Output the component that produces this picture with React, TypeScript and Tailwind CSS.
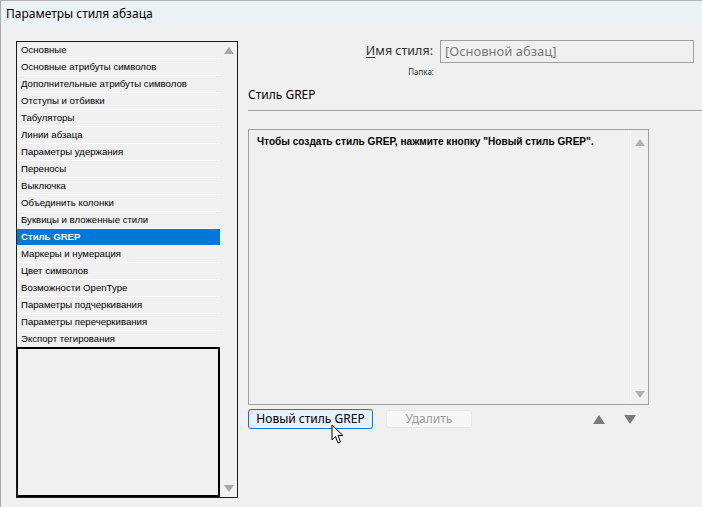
import React from "react";

const items = [
  "Основные",
  "Основные атрибуты символов",
  "Дополнительные атрибуты символов",
  "Отступы и отбивки",
  "Табуляторы",
  "Линии абзаца",
  "Параметры удержания",
  "Переносы",
  "Выключка",
  "Объединить колонки",
  "Буквицы и вложенные стили",
  "Стиль GREP",
  "Маркеры и нумерация",
  "Цвет символов",
  "Возможности OpenType",
  "Параметры подчеркивания",
  "Параметры перечеркивания",
  "Экспорт тегирования",
];

function Tri({ down, color = "#a6a6a6" }: { down?: boolean; color?: string }) {
  return (
    <svg width="10" height="7" viewBox="0 0 10 7">
      <polygon points={down ? "0,0 10,0 5,7" : "5,0 10,7 0,7"} fill={color} />
    </svg>
  );
}

function Cursor() {
  return (
    <svg width="14" height="21" viewBox="0 0 14 21" className="absolute left-[330px] top-[424px]">
      <path d="M1 1 L1 16 L4.5 12.5 L7 19 L9.5 18 L7 11.5 L12 11.5 Z" fill="#fff" stroke="#000" strokeWidth="1" strokeLinejoin="round" />
    </svg>
  );
}

export default function App() {
  return (
    <div className="relative w-[702px] h-[507px] bg-[#f0f0f0] border-l border-[#a8a8a8] overflow-hidden" style={{ fontFamily: '"Noto Sans", sans-serif' }}>
      <div className="h-[26px] bg-[#ebf2f6] border-t border-[#b4b4b4] flex items-center pl-[5px] text-[12px] text-black">
        Параметры стиля абзаца
      </div>

      <div className="flex pl-[15px] pt-[15px]">
        {/* left list */}
        <div className="w-[222px] h-[457px] border border-[#1a1a1a] flex">
          <div className="flex-1 flex flex-col">
            {items.map((t) => (
              <div
                key={t}
                className={
                  "h-[17px] border-b border-white pl-[4px] flex items-center text-[9.6px] leading-none " +
                  (t === "Стиль GREP" ? "bg-[#0078d7] text-white font-semibold" : "bg-[#f0f0f0] text-black")
                }
                style={{ fontFamily: '"Liberation Sans", Arial, sans-serif' }}
              >
                {t}
              </div>
            ))}
            <div className="flex-1 border-2 border-l border-black -mt-px"></div>
          </div>
          <div className="w-[17px] flex flex-col items-center justify-between pt-[5px] pb-[5px]">
            <Tri />
            <Tri down />
          </div>
        </div>

        {/* right column */}
        <div className="ml-[10px] flex-1 flex flex-col -mt-[1px]">
          <div className="flex items-center h-[23px]">
            <div className="w-[185px] text-right text-[12.5px] text-[#333]">
              <span className="underline underline-offset-2">И</span>мя стиля:
            </div>
            <div className="ml-[7px] w-[254px] h-[23px] border border-[#a0a0a0] flex items-center pl-[4px] text-[13px] text-[#7a7a7a]">
              [Основной абзац]
            </div>
          </div>
          <div className="mt-[3px] w-[186px] text-right text-[8px] leading-[12px] text-[#333]">Папка:</div>
          <div className="mt-[9px] text-[12px] leading-[16px] text-black">Стиль GREP</div>
          <div className="mt-[7px] h-px bg-[#a0a0a0]"></div>

          <div className="mt-[18px] w-[401px] h-[276px] border border-[#a0a0a0] flex">
            <div className="flex-1 pl-[8px] pt-[5px] text-[10.1px] font-bold text-black leading-[14px]" style={{ fontFamily: '"Liberation Sans", Arial, sans-serif' }}>
              Чтобы создать стиль GREP, нажмите кнопку "Новый стиль GREP".
            </div>
            <div className="w-[18px] border-l border-white flex flex-col items-center justify-between pt-[9px] pb-[6px]">
              <Tri color="#b0b0b0" />
              <Tri down color="#b0b0b0" />
            </div>
          </div>

          <div className="mt-[4px] flex items-center">
            <button className="w-[125px] h-[20px] rounded-[3px] border border-[#0078d7] bg-[#e5f1fb] text-[12px] text-black flex items-center justify-center">
              Новый стиль GREP
            </button>
            <button className="ml-[13px] w-[86px] h-[18px] rounded-[3px] border border-[#e8e8e8] bg-[#f7f7f7] text-[12px] text-[#9a9a9a] flex items-center justify-center">
              Удалить
            </button>
            <div className="ml-[121px] flex items-center gap-[19px]">
              <svg width="12" height="9" viewBox="0 0 12 9">
                <polygon points="6,0 12,9 0,9" fill="#7a7a7a" />
              </svg>
              <svg width="12" height="9" viewBox="0 0 12 9">
                <polygon points="0,0 12,0 6,9" fill="#7a7a7a" />
              </svg>
            </div>
          </div>
        </div>
      </div>

      <Cursor />
    </div>
  );
}
